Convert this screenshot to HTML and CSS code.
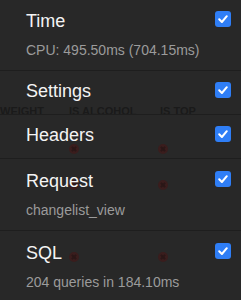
FILE: index.html
```html
<!DOCTYPE html>
<html>
<head>
<meta charset="utf-8">
<link rel="stylesheet" href="styles.css">
</head>
<body>
<div class="backdrop" aria-hidden="true">
  <div class="bg-head">
    <span class="bg-col c1">WEIGHT</span>
    <span class="bg-col c2">IS ALCOHOL</span>
    <span class="bg-col c3">IS TOP</span>
  </div>
  <span class="dot" style="left:69px;top:144px"></span>
  <span class="dot" style="left:158px;top:144px"></span>
  <span class="dot" style="left:69px;top:180px"></span>
  <span class="dot" style="left:158px;top:180px"></span>
  <span class="dot" style="left:69px;top:252px"></span>
  <span class="dot" style="left:158px;top:252px"></span>
</div>
<ul class="panels">
  <li class="panel has-sub">
    <div class="text">
      <div class="title">Time</div>
      <div class="sub">CPU: 495.50ms (704.15ms)</div>
    </div>
    <span class="check"><svg viewBox="0 0 16 16" width="16" height="16"><path d="M4.2 8.3 L6.9 11 L11.8 5.2" fill="none" stroke="#fff" stroke-width="2" stroke-linecap="round" stroke-linejoin="round"/></svg></span>
  </li>
  <li class="panel">
    <div class="text">
      <div class="title">Settings</div>
    </div>
    <span class="check"><svg viewBox="0 0 16 16" width="16" height="16"><path d="M4.2 8.3 L6.9 11 L11.8 5.2" fill="none" stroke="#fff" stroke-width="2" stroke-linecap="round" stroke-linejoin="round"/></svg></span>
  </li>
  <li class="panel">
    <div class="text">
      <div class="title">Headers</div>
    </div>
    <span class="check"><svg viewBox="0 0 16 16" width="16" height="16"><path d="M4.2 8.3 L6.9 11 L11.8 5.2" fill="none" stroke="#fff" stroke-width="2" stroke-linecap="round" stroke-linejoin="round"/></svg></span>
  </li>
  <li class="panel has-sub">
    <div class="text">
      <div class="title">Request</div>
      <div class="sub">changelist_view</div>
    </div>
    <span class="check"><svg viewBox="0 0 16 16" width="16" height="16"><path d="M4.2 8.3 L6.9 11 L11.8 5.2" fill="none" stroke="#fff" stroke-width="2" stroke-linecap="round" stroke-linejoin="round"/></svg></span>
  </li>
  <li class="panel has-sub">
    <div class="text">
      <div class="title">SQL</div>
      <div class="sub">204 queries in 184.10ms</div>
    </div>
    <span class="check"><svg viewBox="0 0 16 16" width="16" height="16"><path d="M4.2 8.3 L6.9 11 L11.8 5.2" fill="none" stroke="#fff" stroke-width="2" stroke-linecap="round" stroke-linejoin="round"/></svg></span>
  </li>
</ul>
</body>
</html>
```
FILE: styles.css
```css
html, body {
  margin: 0;
  padding: 0;
  background: #282828;
  height: 100%;
  overflow: hidden;
}
body {
  position: relative;
  font-family: "Liberation Sans", Arial, sans-serif;
}
.backdrop {
  position: absolute;
  inset: 0;
  z-index: 0;
}
.bg-head {
  position: absolute;
  left: 0;
  right: 0;
  top: 105px;
  height: 9px;
  border-bottom: 1px solid #323232;
  font-size: 11px;
  font-weight: bold;
  color: #1a1a1a;
  line-height: 12px;
}
.bg-col { position: absolute; top: 0; }
.c1 { left: 0; }
.c2 { left: 69px; }
.c3 { left: 160px; }
.dot {
  position: absolute;
  width: 10px;
  height: 10px;
  border-radius: 50%;
  background: #3a1d1d;
}
.dot::before,
.dot::after {
  content: "";
  position: absolute;
  left: 2px;
  top: 4px;
  width: 6px;
  height: 2px;
  background: #2a1717;
  transform: rotate(45deg);
}
.dot::after { transform: rotate(-45deg); }
.panels {
  position: relative;
  z-index: 1;
  list-style: none;
  margin: -1px 0 0;
  padding: 0;
}
.panel {
  display: flex;
  align-items: flex-start;
  justify-content: space-between;
  padding: 9px 10px 12px 26px;
  border-bottom: 1px solid #1e1e1e;
}
.panel.has-sub {
  padding-top: 11px;
  padding-bottom: 11px;
}
.title {
  font-size: 18px;
  line-height: 22px;
  color: #f4f4f4;
}
.sub {
  margin-top: 9px;
  font-size: 14px;
  line-height: 18px;
  color: #9b9b9b;
}
.check {
  width: 16px;
  height: 16px;
  margin-top: 2px;
  border-radius: 3px;
  background: #2f7ef6;
  display: flex;
}
.panel.has-sub .check { margin-top: 1px; }
```
